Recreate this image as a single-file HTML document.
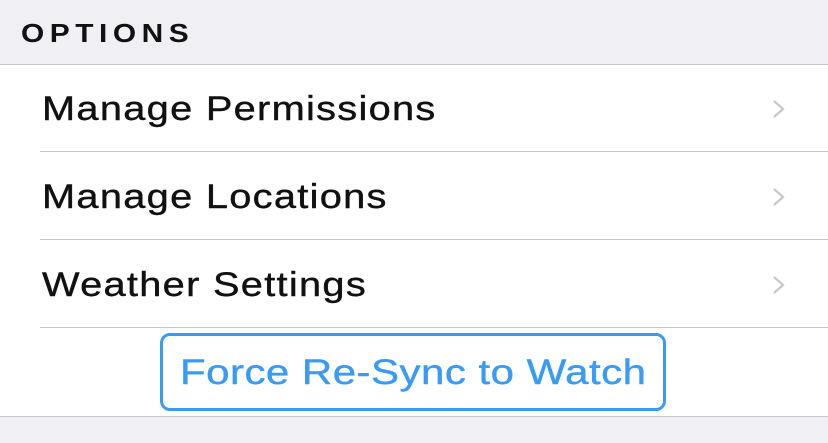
<!DOCTYPE html><html><head><style>
body{margin:0;width:828px;height:443px;background:#efeff4;font-family:"Liberation Sans",sans-serif;overflow:hidden;position:relative}
.h{position:absolute;left:21px;top:18px;font-size:26px;font-weight:bold;letter-spacing:4.8px;color:#111;transform:scaleX(1.15);transform-origin:left}
.list{position:absolute;top:64px;left:0;width:828px;height:351px;background:#fff;border-top:1px solid #c8c7cc;border-bottom:1px solid #c8c7cc}
.row{position:absolute;left:42px;font-size:34px;color:#111;letter-spacing:1.1px;transform:scaleX(1.17);transform-origin:left;white-space:nowrap;-webkit-text-stroke:0.4px #111}
.sep{position:absolute;left:40px;right:0;height:1px;background:#c8c7cc}
.chev{position:absolute;left:772px}
.btn{position:absolute;left:160px;top:268px;width:500px;height:72px;border:3px solid #3a9bf5;border-radius:10px;box-sizing:content-box}
.bt{position:absolute;left:180px;top:288px;color:#3a9bf5;font-size:35px;white-space:nowrap;transform:scaleX(1.2);transform-origin:left;letter-spacing:0.4px;-webkit-text-stroke:0.4px #3a9bf5}
</style></head><body>
<div class="h">OPTIONS</div>
<div class="list">
<div class="row" style="top:25px">Manage Permissions</div>
<div class="sep" style="top:86px"></div>
<div class="row" style="top:113px">Manage Locations</div>
<div class="sep" style="top:174px"></div>
<div class="row" style="top:201px">Weather Settings</div>
<div class="sep" style="top:262px"></div>
<svg class="chev" style="top:35px" width="14" height="18"><path d="M2 1l9 8-9 8" fill="none" stroke="#c7c7cc" stroke-width="2.2"/></svg>
<svg class="chev" style="top:123px" width="14" height="18"><path d="M2 1l9 8-9 8" fill="none" stroke="#c7c7cc" stroke-width="2.2"/></svg>
<svg class="chev" style="top:211px" width="14" height="18"><path d="M2 1l9 8-9 8" fill="none" stroke="#c7c7cc" stroke-width="2.2"/></svg>
<div class="btn"></div>
<div class="bt">Force Re-Sync to Watch</div>
</div>
</body></html>
